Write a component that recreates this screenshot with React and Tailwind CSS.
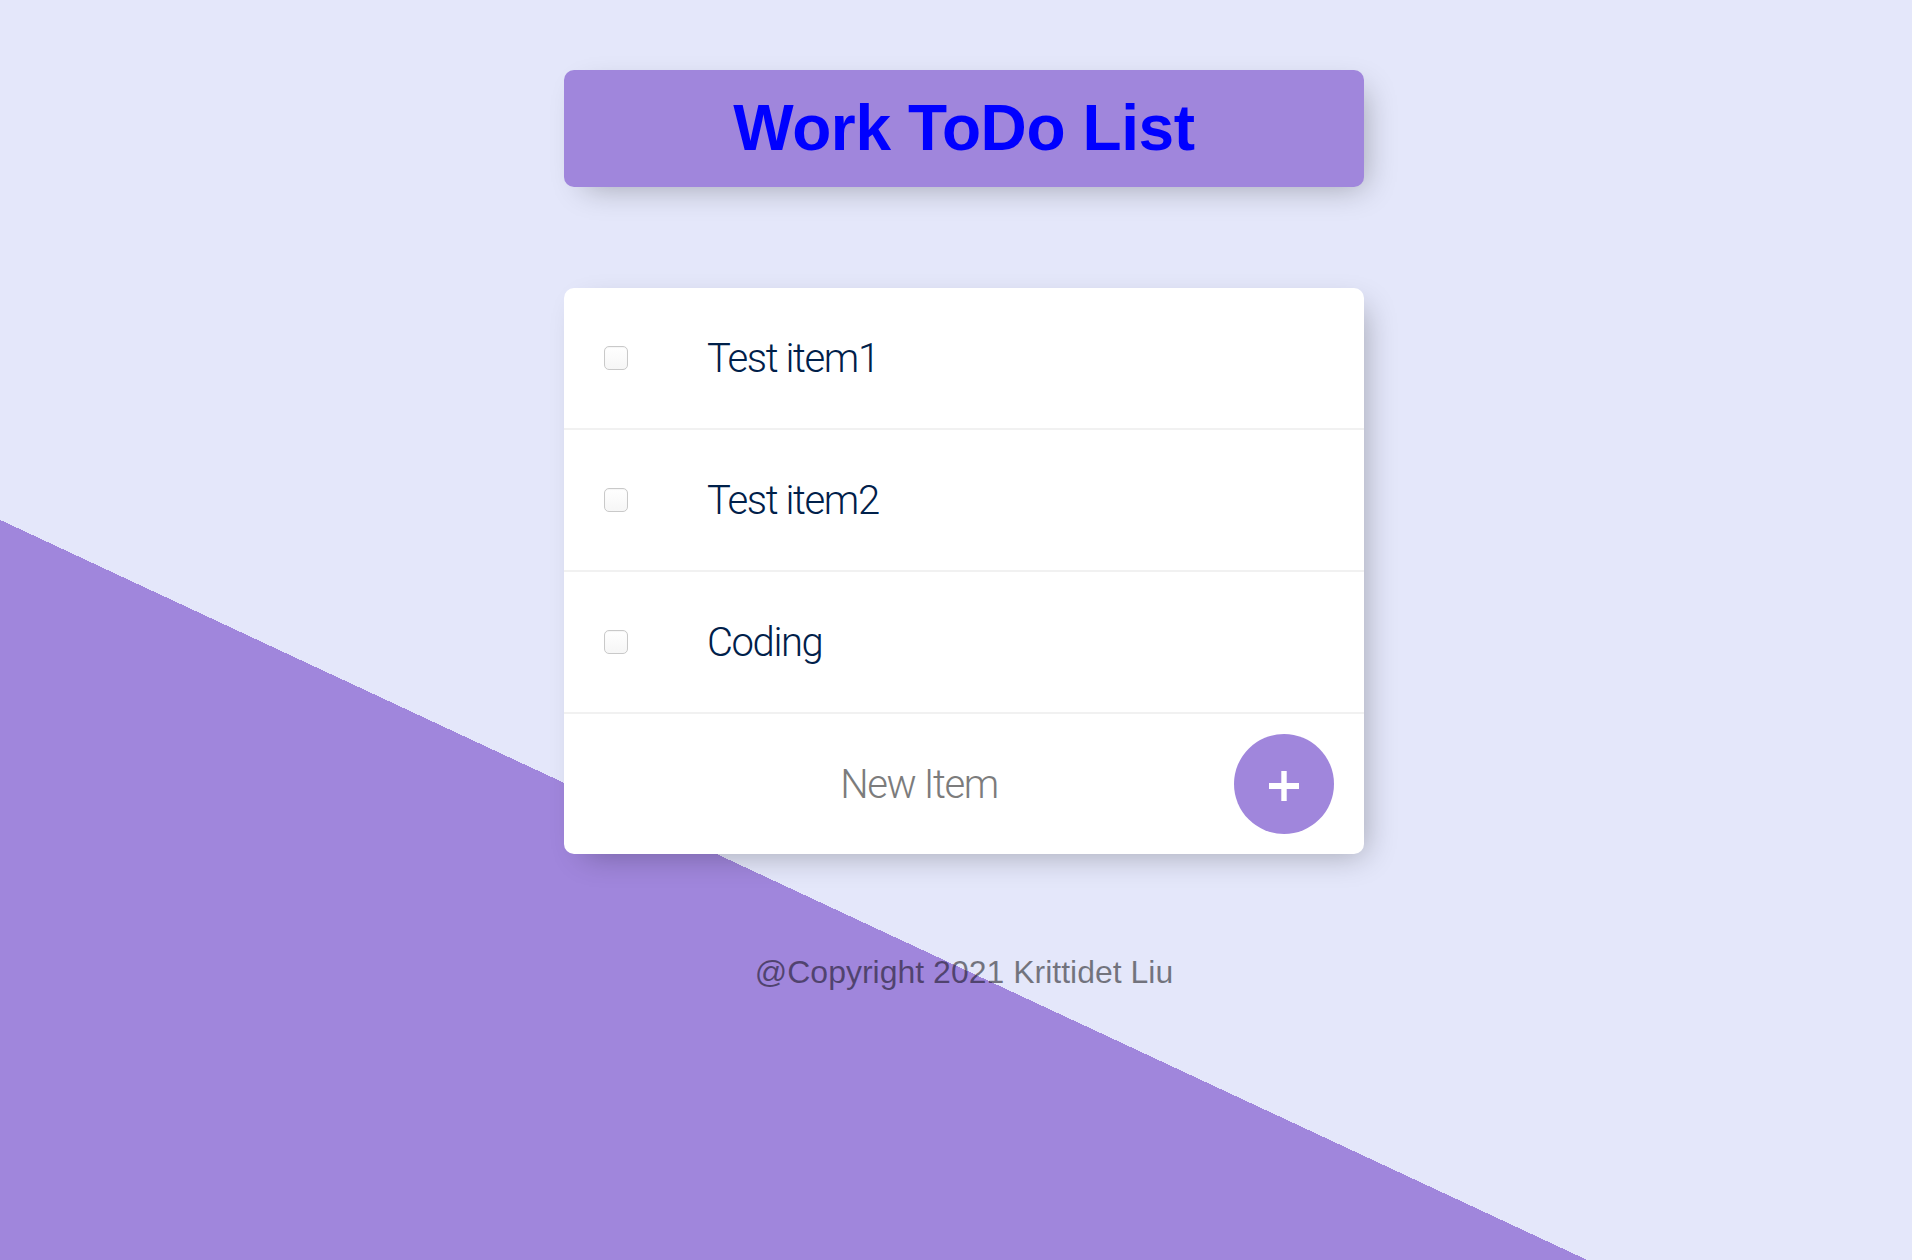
import React from "react";

const items = ["Test item1", "Test item2", "Coding"];

function Checkbox() {
  return (
    <div className="w-[24px] h-[24px] shrink-0 rounded-[5px] border border-[#c9c9c9] bg-[linear-gradient(#ffffff,#f6f6f6)] shadow-[inset_0_1px_1px_rgba(0,0,0,0.04)]" />
  );
}

export default function App() {
  return (
    <div className="min-h-screen w-full bg-[#e4e7fa] bg-[linear-gradient(25deg,#a086dc_34.4%,#e4e7fa_34.4%)] pl-[16px] font-['Liberation_Sans',Arial,sans-serif]">
      <div className="mx-auto w-[800px] pt-[70px]">
        <div className="rounded-[10px] bg-[#a086dc] px-5 pt-[20px] pb-[20px] text-center shadow-[10px_10px_30px_-10px_rgba(0,0,0,0.3)]">
          <h1 className="text-[64px] font-bold leading-[77px] tracking-[-0.4px] text-[#0000ff]">
            Work ToDo List
          </h1>
        </div>

        <div className="mt-[101px] rounded-[10px] bg-white shadow-[10px_10px_30px_-10px_rgba(0,0,0,0.3)]">
          {items.map((t) => (
            <div
              key={t}
              className="flex h-[142px] items-center border-b-2 border-[#f1f1f1] pl-[40px]"
            >
              <Checkbox />
              <p className="mt-[2px] pl-[79px] text-[40px] font-light leading-[48px] tracking-[-1.4px] text-[#00204a] font-['Roboto','Liberation_Sans',sans-serif]">
                {t}
              </p>
            </div>
          ))}
          <div className="flex h-[140px] items-center pl-[40px] pr-[30px]">
            <input
              type="text"
              placeholder="New Item"
              className="h-[120px] min-w-0 flex-1 bg-transparent text-center text-[40px] font-light tracking-[-1.4px] text-[#00204a] outline-none placeholder:text-[#7c7c7c] font-['Roboto','Liberation_Sans',sans-serif]"
            />
            <button className="flex h-[100px] w-[100px] shrink-0 items-center justify-center rounded-full bg-[#a086dc]">
              <svg width="32" height="32" viewBox="0 0 32 32" className="mt-[4px]">
                <rect x="1" y="13" width="30" height="6" fill="#ffffff" />
                <rect x="13.3" y="1" width="5.4" height="30" fill="#ffffff" />
              </svg>
            </button>
          </div>
        </div>

        <footer className="mt-[100px] text-center text-[32px] leading-[37px] text-black/50">
          @Copyright 2021 Krittidet Liu
        </footer>
      </div>
    </div>
  );
}
